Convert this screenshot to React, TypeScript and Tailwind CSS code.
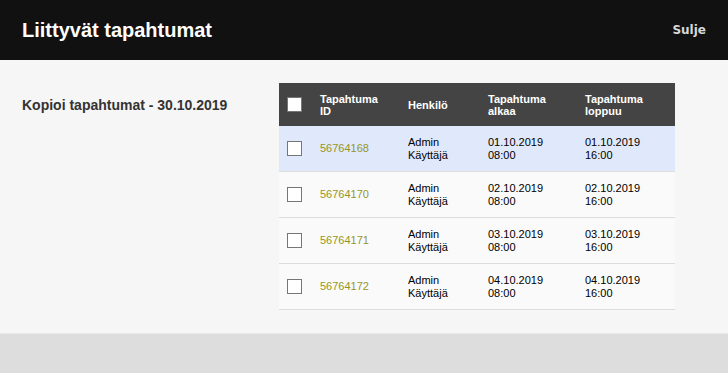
const rows = [
  { id: '56764168', day: '01.10.2019', active: true },
  { id: '56764170', day: '02.10.2019', active: false },
  { id: '56764171', day: '03.10.2019', active: false },
  { id: '56764172', day: '04.10.2019', active: false },
];

const cols = 'grid grid-cols-[41px_88px_80px_97px_90px] items-center';

function Box() {
  return <div className="h-[15px] w-[15px] border border-[#767676] bg-white" />;
}

export default function App() {
  return (
    <div className="flex h-[373px] w-[728px] flex-col bg-[#dddddd] font-['Liberation_Sans',Arial,sans-serif]">
      <header className="flex h-[60px] items-center justify-between bg-[#111111] pl-[22px] pr-[22px]">
        <h1 className="text-[20px] font-bold text-white">Liittyvät tapahtumat</h1>
        <button className="font-['DejaVu_Sans',sans-serif] text-[12px] font-bold text-[#d8d8d8]">Sulje</button>
      </header>

      <main className="flex h-[274px] border-b border-[#e9e9e9] bg-[#f6f6f6] pt-[23px]">
        <div className="w-[279px] pl-[22px] pt-[12px]">
          <h2 className="text-[14px] font-bold text-[#333333]">Kopioi tapahtumat - 30.10.2019</h2>
        </div>

        <div className="w-[396px]">
          <div className={`${cols} h-[43px] bg-[#444444] text-[11px] font-bold leading-[12px] text-white`}>
            <div className="pl-[8px]">
              <Box />
            </div>
            <div>Tapahtuma<br />ID</div>
            <div>Henkilö</div>
            <div>Tapahtuma<br />alkaa</div>
            <div>Tapahtuma<br />loppuu</div>
          </div>

          {rows.map((r) => (
            <div
              key={r.id}
              className={`${cols} h-[46px] border-b border-[#dddddd] text-[11px] leading-[13px] text-black ${
                r.active ? 'bg-[#e0e8fb]' : 'bg-[#fafafa]'
              }`}
            >
              <div className="pl-[8px]">
                <Box />
              </div>
              <div className="text-[#96961e]">{r.id}</div>
              <div>Admin<br />Käyttäjä</div>
              <div>{r.day}<br />08:00</div>
              <div>{r.day}<br />16:00</div>
            </div>
          ))}
        </div>
      </main>
    </div>
  );
}
